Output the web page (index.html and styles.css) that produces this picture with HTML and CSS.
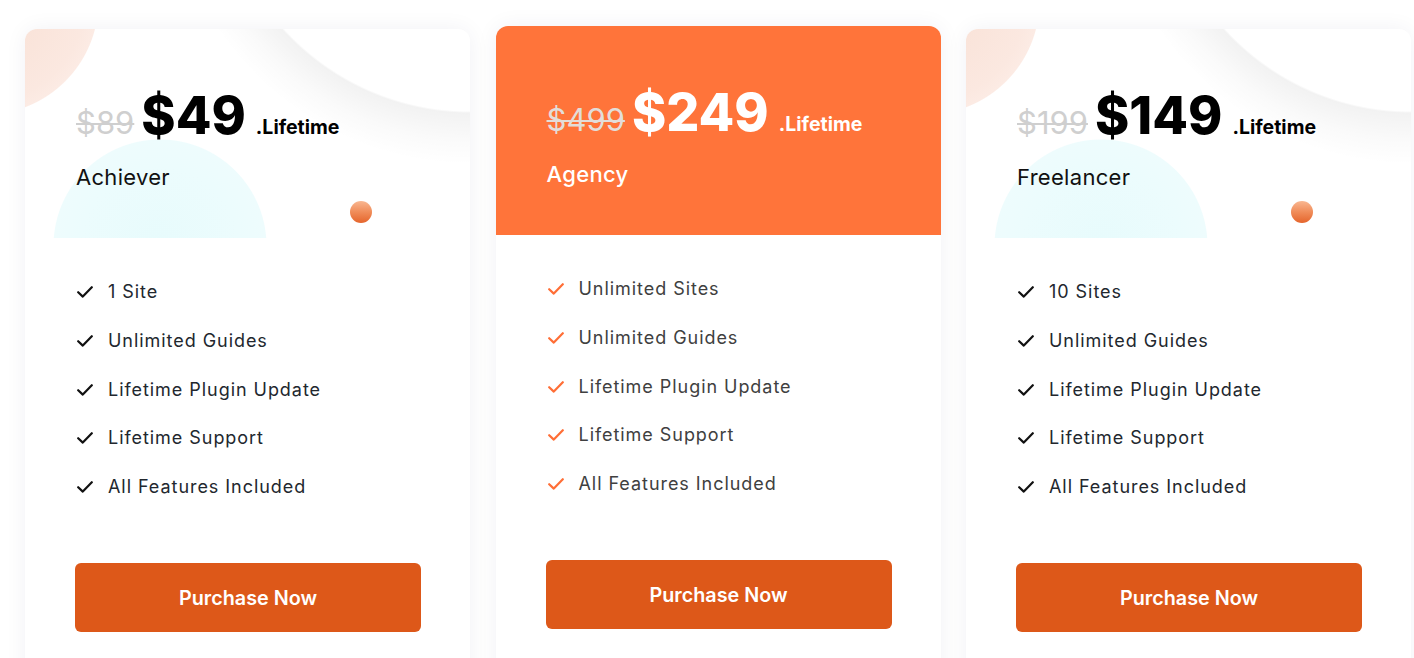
FILE: index.html
```html
<!DOCTYPE html>
<html lang="en">
<head>
<meta charset="utf-8">
<title>Pricing</title>
<link rel="stylesheet" href="styles.css">
</head>
<body>
<div class="plans">
  <div class="card side">
    <div class="head deco">
      <span class="ball"></span>
      <div class="price"><s class="old">$89</s><span class="now">$49</span><span class="term">.Lifetime</span></div>
      <div class="name">Achiever</div>
    </div>
    <ul class="features">
      <li><svg class="chk" viewBox="0 0 16 12"><path d="M1.2 6.2 L5.8 10.6 L14.8 1.2"/></svg>1 Site</li>
      <li><svg class="chk" viewBox="0 0 16 12"><path d="M1.2 6.2 L5.8 10.6 L14.8 1.2"/></svg>Unlimited Guides</li>
      <li><svg class="chk" viewBox="0 0 16 12"><path d="M1.2 6.2 L5.8 10.6 L14.8 1.2"/></svg>Lifetime Plugin Update</li>
      <li><svg class="chk" viewBox="0 0 16 12"><path d="M1.2 6.2 L5.8 10.6 L14.8 1.2"/></svg>Lifetime Support</li>
      <li><svg class="chk" viewBox="0 0 16 12"><path d="M1.2 6.2 L5.8 10.6 L14.8 1.2"/></svg>All Features Included</li>
    </ul>
    <a class="btn" href="#">Purchase Now</a>
  </div>

  <div class="card featured">
    <div class="head">
      <div class="price"><s class="old">$499</s><span class="now">$249</span><span class="term">.Lifetime</span></div>
      <div class="name">Agency</div>
    </div>
    <ul class="features">
      <li><svg class="chk" viewBox="0 0 16 12"><path d="M1.2 6.2 L5.8 10.6 L14.8 1.2"/></svg>Unlimited Sites</li>
      <li><svg class="chk" viewBox="0 0 16 12"><path d="M1.2 6.2 L5.8 10.6 L14.8 1.2"/></svg>Unlimited Guides</li>
      <li><svg class="chk" viewBox="0 0 16 12"><path d="M1.2 6.2 L5.8 10.6 L14.8 1.2"/></svg>Lifetime Plugin Update</li>
      <li><svg class="chk" viewBox="0 0 16 12"><path d="M1.2 6.2 L5.8 10.6 L14.8 1.2"/></svg>Lifetime Support</li>
      <li><svg class="chk" viewBox="0 0 16 12"><path d="M1.2 6.2 L5.8 10.6 L14.8 1.2"/></svg>All Features Included</li>
    </ul>
    <a class="btn" href="#">Purchase Now</a>
  </div>

  <div class="card side">
    <div class="head deco">
      <span class="ball"></span>
      <div class="price"><s class="old">$199</s><span class="now">$149</span><span class="term">.Lifetime</span></div>
      <div class="name">Freelancer</div>
    </div>
    <ul class="features">
      <li><svg class="chk" viewBox="0 0 16 12"><path d="M1.2 6.2 L5.8 10.6 L14.8 1.2"/></svg>10 Sites</li>
      <li><svg class="chk" viewBox="0 0 16 12"><path d="M1.2 6.2 L5.8 10.6 L14.8 1.2"/></svg>Unlimited Guides</li>
      <li><svg class="chk" viewBox="0 0 16 12"><path d="M1.2 6.2 L5.8 10.6 L14.8 1.2"/></svg>Lifetime Plugin Update</li>
      <li><svg class="chk" viewBox="0 0 16 12"><path d="M1.2 6.2 L5.8 10.6 L14.8 1.2"/></svg>Lifetime Support</li>
      <li><svg class="chk" viewBox="0 0 16 12"><path d="M1.2 6.2 L5.8 10.6 L14.8 1.2"/></svg>All Features Included</li>
    </ul>
    <a class="btn" href="#">Purchase Now</a>
  </div>
</div>
</body>
</html>
```
FILE: styles.css
```css
* {
  box-sizing: border-box;
  margin: 0;
  padding: 0;
}

html, body {
  background: #ffffff;
  overflow: hidden;
}

body {
  font-family: Inter, "Noto Sans", "Liberation Sans", sans-serif;
  color: #1f2329;
}

.plans {
  display: flex;
  align-items: flex-start;
  gap: 25.5px;
  padding: 26px 0 0 25px;
}

.card {
  flex: 0 0 445px;
  width: 445px;
  height: 720px;
  background: #ffffff;
  border-radius: 12px;
  box-shadow: 0 0 22px rgba(30, 40, 90, 0.06);
}

.side {
  margin-top: 3px;
}

.head {
  position: relative;
  height: 209px;
  border-radius: 12px 12px 0 0;
  overflow: hidden;
  padding: 62px 30px 0 51px;
}

.deco {
  background:
    radial-gradient(circle 108px at 135px 217px, #e7fbfc 0, #ecfcfd 80px, #eefcfd 106px, rgba(238, 252, 253, 0) 107px),
    radial-gradient(circle 115px at -40px -28px, #f8dfd3 0, #fbe8e0 100px, #fcebe4 113px, rgba(252, 236, 229, 0) 114px),
    radial-gradient(circle 305px at 445px -169px, #ffffff 251px, rgba(0, 0, 0, 0.05) 253px, rgba(0, 0, 0, 0.018) 280px, rgba(0, 0, 0, 0) 305px),
    #ffffff;
}

.ball {
  position: absolute;
  left: 325px;
  top: 172px;
  width: 22px;
  height: 22px;
  border-radius: 50%;
  background: linear-gradient(180deg, #f9b791 0%, #f08c59 50%, #e5652c 100%);
}

.price {
  position: relative;
  display: flex;
  align-items: baseline;
  height: 50px;
}

.old {
  font-size: 31px;
  font-weight: 400;
  color: #cfcfcf;
  text-decoration: line-through;
  text-decoration-thickness: 2px;
  line-height: 50px;
  margin-right: 7px;
}

.now {
  font-size: 52px;
  font-weight: 800;
  color: #000000;
  line-height: 50px;
}

.term {
  font-size: 19.5px;
  font-weight: 700;
  color: #000000;
  margin-left: 10px;
  line-height: 50px;
}

.name {
  position: relative;
  margin-top: 22px;
  font-size: 22px;
  line-height: 28px;
  letter-spacing: 0.3px;
  color: #111111;
}

.features {
  list-style: none;
  display: flex;
  flex-direction: column;
  gap: 24.75px;
  padding: 42px 0 0 52px;
}

.features li {
  display: flex;
  align-items: center;
  height: 24px;
  font-size: 18px;
  line-height: 24px;
  letter-spacing: 0.95px;
  color: #22272e;
}

.chk {
  width: 16px;
  height: 12px;
  margin-right: 15px;
  fill: none;
  stroke: #111111;
  stroke-width: 2.2;
  stroke-linecap: round;
  stroke-linejoin: round;
}

.btn {
  display: flex;
  align-items: center;
  justify-content: center;
  height: 69px;
  margin: 64px 49px 0 50px;
  border-radius: 6px;
  background: #dd5819;
  color: #ffffff;
  font-size: 19.8px;
  font-weight: 600;
  text-decoration: none;
}

.featured .head {
  background: #ff743a;
}

.featured .old {
  color: #e3ddd9;
}

.featured .now,
.featured .term,
.featured .name {
  color: #ffffff;
}

.featured .name {
  font-weight: 500;
}

.featured .features li {
  color: #404040;
}

.featured .chk {
  stroke: #ff6e36;
}
```
